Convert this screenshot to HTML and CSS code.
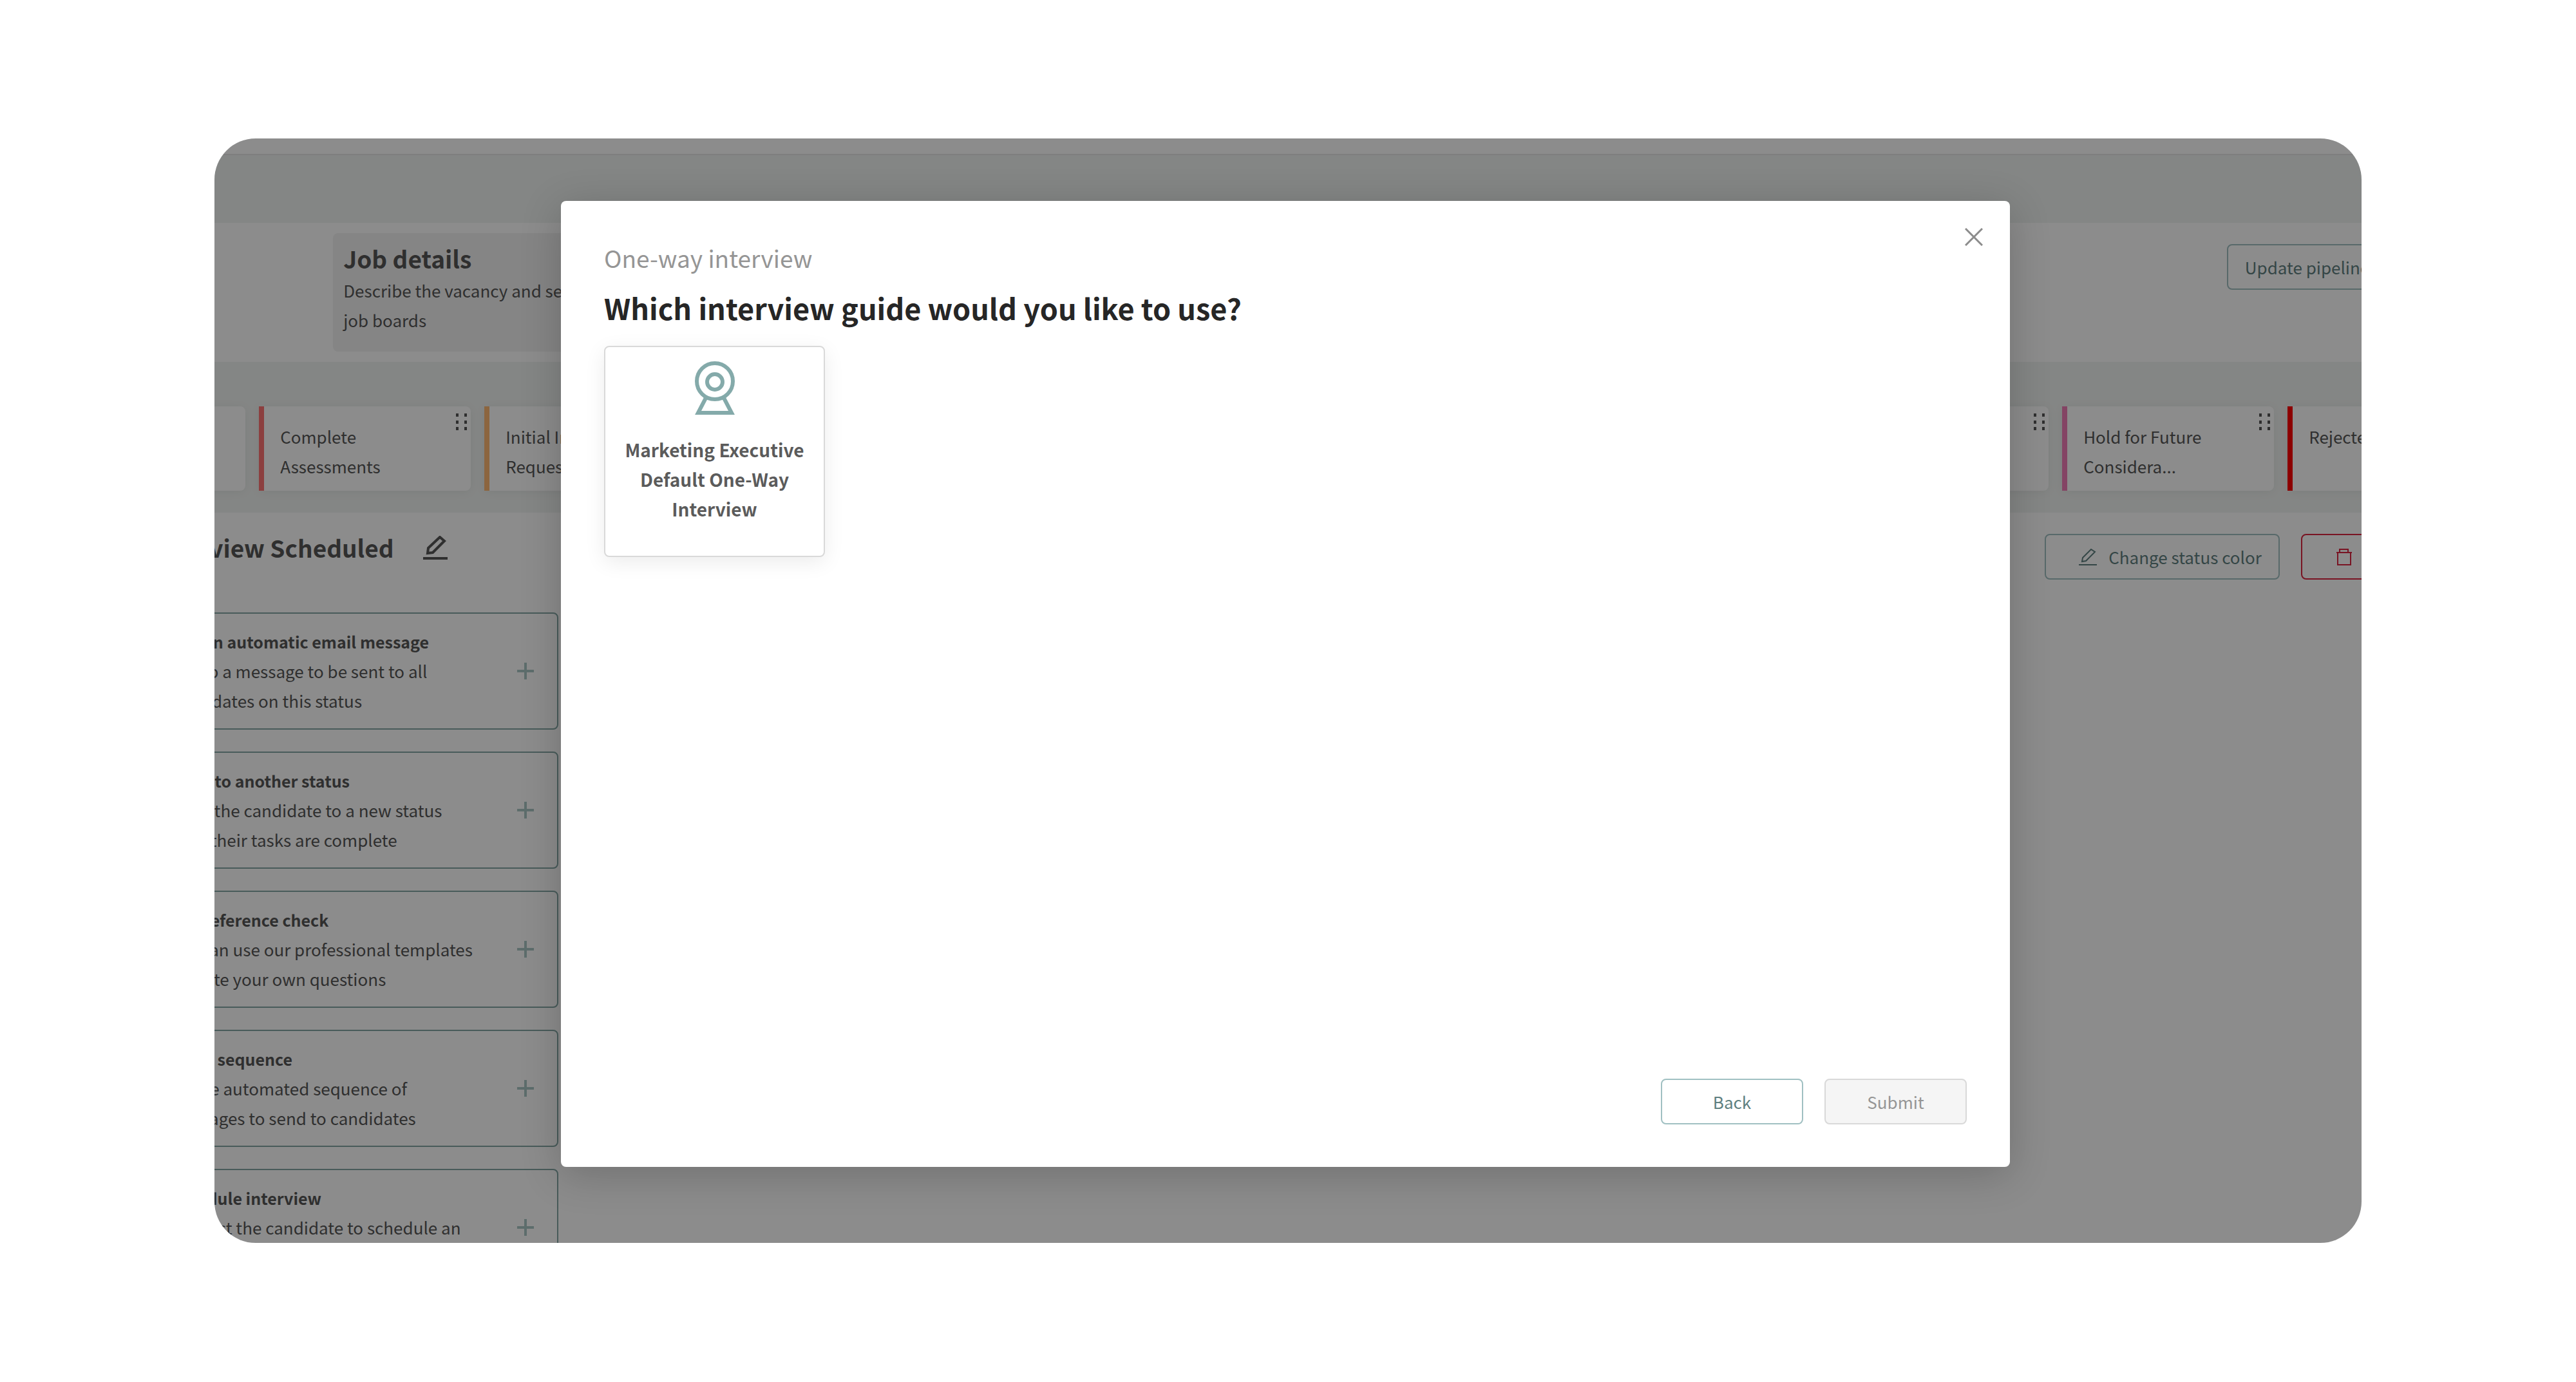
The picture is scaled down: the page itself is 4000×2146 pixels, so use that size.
FILE: index.html
```
<!DOCTYPE html>
<html lang="en">
<head>
    <meta charset="utf-8">
    <title>One-way interview</title>
    <link rel="stylesheet" href="styles.css">
</head>
<body>

<div class="window">

    <!-- Pipeline page -->
    <div class="topbar"></div>
    <div class="toolbar"></div>

    <div class="steps">
        <a class="step" href="#">
            <h2>Job details</h2>
            <p>Describe the vacancy and set up job boards</p>
        </a>
        <button type="button" class="btn btn-update">Update pipeline</button>
    </div>

    <div class="statuses">
        <div class="status"></div>
        <div class="status red">Complete Assessments <svg class="drag" viewBox="0 0 17 28"><path d="M2 0v5M15 0v5M2 11v5M15 11v5M2 21v5M15 21v5"/></svg></div>
        <div class="status orange">Initial Interview Requested</div>
        <div class="status"></div>
        <div class="status"></div>
        <div class="status"></div>
        <div class="status"></div>
        <div class="status"></div>
        <div class="status"><svg class="drag" viewBox="0 0 17 28"><path d="M2 0v5M15 0v5M2 11v5M15 11v5M2 21v5M15 21v5"/></svg></div>
        <div class="status pink">Hold for Future Considera... <svg class="drag" viewBox="0 0 17 28"><path d="M2 0v5M15 0v5M2 11v5M15 11v5M2 21v5M15 21v5"/></svg></div>
        <div class="status rejected">Rejected</div>
    </div>

    <div class="status-head">
        <h2>Interview Scheduled</h2>
        <svg class="pencil" viewBox="0 0 38 38"><path d="M7 27L8 19L26 2L33 8L15 26Z"/><path d="M0 35H38"/></svg>
        <div class="status-actions">
            <button type="button" class="btn btn-color"><svg viewBox="0 0 28 28"><path d="M5 21L6 15L19 2L25 6L11 20Z"/><path d="M0 26H28"/></svg>Change status color</button>
            <button type="button" class="btn btn-delete"><svg viewBox="0 0 26 28"><path d="M1 7H25M6 7V2H19V7M3 7V26H23V7"/></svg>Delete status</button>
        </div>
    </div>

    <div class="actions">
        <div class="action">
            <div>
                <h3>Add an automatic email message</h3>
                <p>Set up a message to be sent to all<br>candidates on this status</p>
            </div>
            <svg viewBox="0 0 26 26"><path d="M13 0V26M0 13H26"/></svg>
        </div>
        <div class="action">
            <div>
                <h3>Move to another status</h3>
                <p>Move the candidate to a new status<br>once their tasks are complete</p>
            </div>
            <svg viewBox="0 0 26 26"><path d="M13 0V26M0 13H26"/></svg>
        </div>
        <div class="action">
            <div>
                <h3>Add reference check</h3>
                <p>You can use our professional templates<br>or write your own questions</p>
            </div>
            <svg viewBox="0 0 26 26"><path d="M13 0V26M0 13H26"/></svg>
        </div>
        <div class="action">
            <div>
                <h3>Email sequence</h3>
                <p>Create automated sequence of<br>messages to send to candidates</p>
            </div>
            <svg viewBox="0 0 26 26"><path d="M13 0V26M0 13H26"/></svg>
        </div>
        <div class="action">
            <div>
                <h3>Schedule interview</h3>
                <p>Request the candidate to schedule an<br>interview</p>
            </div>
            <svg viewBox="0 0 26 26"><path d="M13 0V26M0 13H26"/></svg>
        </div>
    </div>

    <!-- Modal -->
    <div class="overlay">
        <div class="modal" role="dialog" aria-labelledby="modalTitle">
            <button type="button" class="close" aria-label="Close"><svg viewBox="0 0 28 28"><path d="M1 1L27 27M27 1L1 27"/></svg></button>
            <p class="subtitle">One-way interview</p>
            <h1 id="modalTitle">Which interview guide would you like to use?</h1>
            <button type="button" class="guide">
                <svg viewBox="0 0 64 84"><circle cx="32" cy="31" r="28"/><circle cx="32" cy="32" r="12"/><path d="M18 57L6 80H58L46 57"/></svg>
                Marketing Executive Default One-Way Interview
            </button>
            <div class="modal-footer">
                <button type="button" class="btn btn-back">Back</button>
                <button type="button" class="btn btn-submit" disabled>Submit</button>
            </div>
        </div>
    </div>

</div>

</body>
</html>
```
FILE: styles.css
```
* {
    box-sizing: border-box;
}

body {
    margin: 0;
    height: 100vh;
    padding: 215px 8.33vw 216px;
    background: #fff;
    color: #565656;
    font-family: "Noto Sans CJK SC", "Open Sans", sans-serif;
    font-size: 26px;
    line-height: 46px;
}

h1, h2, h3, p {
    margin: 0;
}

h2 {
    font-size: 37px;
    line-height: 54px;
}

h3 {
    font-size: 25px;
    line-height: 46px;
}

svg {
    display: block;
    flex: none;
    fill: none;
    stroke: currentColor;
}

.window {
    position: relative;
    height: 100%;
    overflow: hidden;
    border-radius: 64px;
    background: #fff;
}

/* Header bars */
.topbar {
    height: 26px;
    border-bottom: 2px solid #e6e6e6;
}

.toolbar {
    height: 105px;
    background: #f1f4f2;
}

.steps {
    display: flex;
    justify-content: space-between;
    align-items: flex-start;
    padding: 16px 0 16px 184px;
    margin-right: -46px;
}

.step {
    width: 440px;
    padding: 12px 16px 26px;
    border-radius: 8px;
    background: #f3f3f3;
    color: inherit;
    text-decoration: none;
}

/* Buttons */
.btn {
    display: flex;
    align-items: center;
    justify-content: center;
    height: 71px;
    padding: 0 26px;
    border: 2px solid #a0c0c2;
    border-radius: 8px;
    background: none;
    color: #5f8080;
    font: inherit;
    white-space: nowrap;
    cursor: pointer;
}

.btn svg {
    width: 28px;
    height: 28px;
    margin-right: 18px;
    stroke-width: 2;
}

.btn-update {
    width: 255px;
    margin-top: 17px;
    justify-content: flex-start;
}

.btn-color {
    padding-left: 51px;
}

.btn-delete {
    width: 272px;
    justify-content: flex-start;
    padding-left: 51px;
    border-color: #dc2640;
    color: #dc2640;
}

/* Status cards */
.statuses {
    display: flex;
    gap: 21px;
    padding: 69px 0 34px;
    background: #f1f4f2;
}

.status {
    position: relative;
    flex: none;
    width: 329px;
    height: 131px;
    padding: 24px 60px 0 25px;
    border-left: 8px solid #fff;
    border-radius: 0 8px 8px 0;
    background: #fff;
    box-shadow: 0 2px 16px rgba(0, 0, 0, 0.06);
}

.status:first-child {
    margin-left: -281px;
}

.status.red { border-color: #ff7373; }
.status.orange { border-color: #ffb973; }
.status.pink { border-color: #f07cb6; }
.status.rejected { border-color: #f00; }

.drag {
    position: absolute;
    top: 11px;
    right: 6px;
    width: 17px;
    height: 28px;
    stroke-width: 4;
}

/* Selected status */
.status-head {
    display: flex;
    align-items: flex-start;
    padding: 27px 0 51px;
    margin: 0 -178px 0 -97px;
}

.pencil {
    width: 38px;
    height: 38px;
    margin: 9px 0 0 45px;
    stroke-width: 4;
}

.status-actions {
    display: flex;
    gap: 33px;
    margin: 6px 0 0 auto;
}

.actions {
    display: flex;
    flex-direction: column;
    gap: 34px;
    width: 641px;
    margin-left: -107px;
}

.action {
    display: flex;
    align-items: center;
    justify-content: space-between;
    padding: 20px 36px 20px 34px;
    border: 2px solid #83a7a5;
    border-radius: 8px;
}

.action svg {
    width: 26px;
    height: 26px;
    color: #a9c6c5;
    stroke-width: 4;
}

/* Modal */
.overlay {
    position: absolute;
    inset: 0;
    display: flex;
    justify-content: center;
    padding: 97px 8px 118px 0;
    background: rgba(0, 0, 0, 0.45);
}

.modal {
    position: relative;
    display: flex;
    flex-direction: column;
    align-items: flex-start;
    width: 67.5vw;
    max-width: 2250px;
    padding: 61px 67px 66px;
    border-radius: 8px;
    background: #fff;
    box-shadow: 0 12px 64px rgba(0, 0, 0, 0.2);
}

.subtitle {
    color: #959595;
    font-size: 37px;
    line-height: 54px;
}

.modal h1 {
    margin: 11px 0 19px;
    color: #262626;
    font-size: 45px;
    line-height: 80px;
}

.close {
    position: absolute;
    top: 42px;
    right: 42px;
    padding: 0;
    border: 0;
    background: none;
    color: #8c8c8c;
    cursor: pointer;
}

.close svg {
    width: 28px;
    height: 28px;
    stroke-width: 3;
}

.guide {
    width: 343px;
    padding: 22px 22px 50px;
    border: 2px solid #d9d9d9;
    border-radius: 8px;
    background: #fff;
    box-shadow: 0 8px 32px rgba(0, 0, 0, 0.08);
    color: #5b5b5b;
    font: bold 28px/46px "Noto Sans CJK SC", "Open Sans", sans-serif;
    text-align: center;
    cursor: pointer;
}

.guide svg {
    width: 64px;
    height: 84px;
    margin: 0 auto 30px;
    color: #84aaaa;
    stroke-width: 6;
}

.modal-footer {
    display: flex;
    gap: 33px;
    margin: auto 0 0 auto;
}

.modal-footer .btn {
    width: 221px;
}

.modal-footer .btn-submit {
    border-color: #d9d9d9;
    background: #f5f5f5;
    color: #959595;
    cursor: default;
}
```
